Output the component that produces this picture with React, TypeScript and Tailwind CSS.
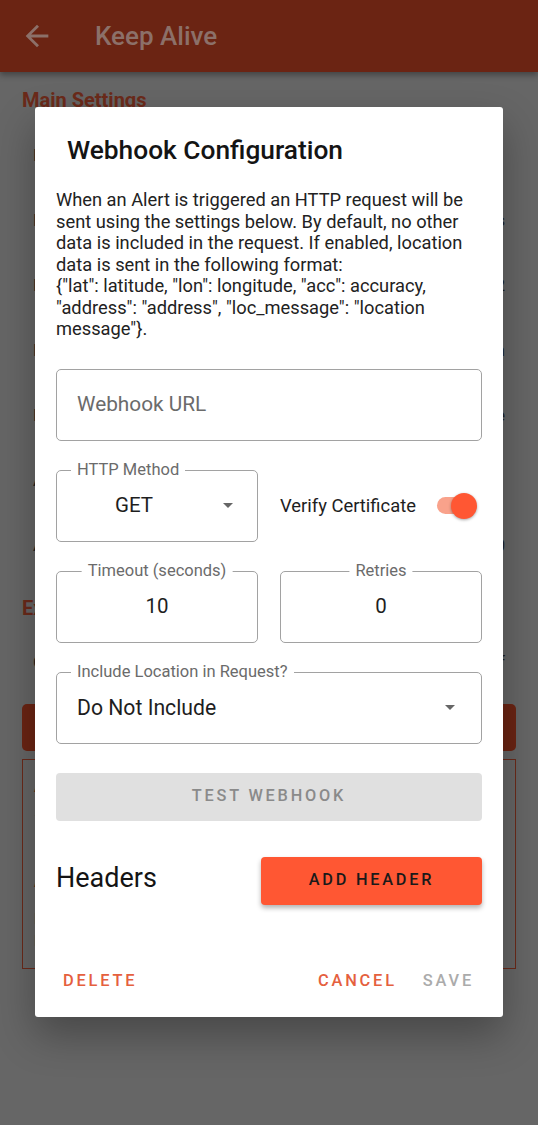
import React from "react"

// background page rows (dimmed under the scrim)
const mainRows = [
  { label: "Enabled", value: "" },
  { label: "Device Check Interval", value: "12 hours" },
  { label: "Hours of Inactivity", value: "12" },
  { label: "Reset on Unlock", value: "On" },
  { label: "Rest Period", value: "None" },
  { label: "Alert Message", value: "" },
  { label: "Alert Recipients", value: "0" },
]

function Caret() {
  return <span className="block w-0 h-0 border-l-[5px] border-r-[5px] border-t-[5px] border-l-transparent border-r-transparent border-t-[#666]" />
}

function Field({ label, center, className, children }: { label: string; center?: boolean; className?: string; children: React.ReactNode }) {
  return (
    <div className={"relative h-[72px] border border-[#a2a2a2] rounded-[5px] flex items-center " + (className ?? "")}>
      <span
        className={
          "absolute -top-[11px] px-[6px] bg-white text-[16.5px] leading-[20px] text-[#6b6b6b] whitespace-nowrap " +
          (center ? "left-1/2 -translate-x-1/2" : "left-[14px]")
        }
      >
        {label}
      </span>
      {children}
    </div>
  )
}

export default function App() {
  return (
    <div className="relative w-[538px] h-[1125px] overflow-hidden bg-[#666666] font-['Roboto',sans-serif]">
      {/* BACKGROUND PAGE */}
      <div className="h-[72px] bg-[#6b2413] flex items-center pl-[20px] shadow-[0_3px_6px_rgba(0,0,0,0.35)]">
        <svg width="34" height="34" viewBox="0 0 24 24" fill="#8c7069">
          <path d="M20 11H7.83l5.59-5.59L12 4l-8 8 8 8 1.41-1.41L7.83 13H20v-2z" />
        </svg>
        <span className="ml-[41px] text-[26px] font-medium text-[#8c7069]">Keep Alive</span>
      </div>
      <div className="px-[22px]">
        <div className="mt-[14px] text-[20px] leading-[28px] font-bold text-[#6b2a1a]">Main Settings</div>
        <div className="mt-[9px]">
          {mainRows.map((r) => (
            <div key={r.label} className="h-[65px] flex items-center justify-between pl-[11px] pr-[11px] text-[17px] text-[#1e1e1e]">
              <span>{r.label}</span>
              <span>{r.value}</span>
            </div>
          ))}
        </div>
        <div className="mt-[16px] text-[20px] leading-[28px] font-bold text-[#6b2a1a]">Extra Settings</div>
        <div className="h-[82px] flex items-center justify-between pl-[11px] pr-[11px] text-[17px] text-[#1e1e1e]">
          <span>Custom Message</span>
          <span>Off</span>
        </div>
        <div className="h-[47px] rounded-[5px] bg-[#6b2413]" />
        <div className="mt-[8px] h-[210px] border border-[#6b2a1a] px-[11px] pt-[16px] text-[15px]">
          <div className="text-[#6b2a1a] font-bold">Alert Webhook</div>
          <div className="mt-[6px] text-[#1e1e1e]">–</div>
          <div className="mt-[44px] text-[#6b2a1a] font-bold">Active</div>
          <div className="mt-[14px] text-[#1e1e1e]">Enabled</div>
          <div className="text-[#1e1e1e]">Both</div>
        </div>
      </div>

      {/* DIALOG */}
      <div className="absolute left-[35px] top-[107px] w-[468px] h-[910px] bg-white rounded-[3px] shadow-[0_18px_40px_rgba(0,0,0,0.3)] px-[21px] pt-[27px] flex flex-col">
        <h2 className="ml-[11px] text-[26.3px] leading-[32px] font-medium text-[#141414]">Webhook Configuration</h2>
        <p className="mt-[23px] text-[18.3px] leading-[21.5px] text-[#222]">
          When an Alert is triggered an HTTP request will be sent using the settings below. By default, no other data is included in the request. If enabled, location data is sent in the following format:
          <br />
          {'{"lat": latitude, "lon": longitude, "acc": accuracy, "address": "address", "loc_message": "location message"}.'}
        </p>

        <div className="mt-[29px] h-[72px] border border-[#a2a2a2] rounded-[5px] flex items-center px-[20px] text-[20.8px] text-[#6b6b6b]">
          Webhook URL
        </div>

        <div className="mt-[29px] flex items-center">
          <Field label="HTTP Method" className="w-[202px]">
            <span className="w-[154px] text-center text-[20.5px] text-[#1e1e1e]">GET</span>
            <span className="ml-auto mr-[24px]"><Caret /></span>
          </Field>
          <span className="ml-[22px] text-[18.4px] text-[#1e1e1e]">Verify Certificate</span>
          <div className="relative ml-auto mr-[5px] w-[40px] h-[26px] flex items-center">
            <div className="w-[34px] h-[17px] rounded-full bg-[#f9a28b]" />
            <div className="absolute right-0 top-0 w-[26px] h-[26px] rounded-full bg-[#ff5733] shadow-[0_1px_3px_rgba(0,0,0,0.35)]" />
          </div>
        </div>

        <div className="mt-[29px] flex gap-[22px]">
          <Field label="Timeout (seconds)" center className="w-[202px] justify-center">
            <span className="text-[20.5px] text-[#1e1e1e]">10</span>
          </Field>
          <Field label="Retries" center className="w-[202px] justify-center">
            <span className="text-[20.5px] text-[#1e1e1e]">0</span>
          </Field>
        </div>

        <Field label="Include Location in Request?" className="mt-[29px] pl-[20px]">
          <span className="text-[21.2px] text-[#1e1e1e]">Do Not Include</span>
          <span className="ml-auto mr-[26px]"><Caret /></span>
        </Field>

        <div className="mt-[29px] h-[48px] rounded-[4px] bg-[#e0e0e0] flex items-center justify-center text-[16.3px] font-medium tracking-[2.8px] text-[#8a8a8a]">
          TEST WEBHOOK
        </div>

        <div className="mt-[36px] flex items-center justify-between">
          <span className="text-[27px] text-[#141414] -mt-[4px]">Headers</span>
          <div className="w-[221px] h-[48px] rounded-[4px] bg-[#ff5733] shadow-[0_3px_5px_rgba(0,0,0,0.3)] flex items-center justify-center text-[16.3px] font-medium tracking-[2.8px] text-[#1a1a1a]">
            ADD HEADER
          </div>
        </div>

        <div className="mt-auto mb-[18px] h-[36px] flex items-center text-[16.4px] font-medium tracking-[2.8px]">
          <span className="ml-[7px] text-[#e5603e]">DELETE</span>
          <span className="ml-auto text-[#e5603e]">CANCEL</span>
          <span className="ml-[26px] mr-[8px] text-[#ababab]">SAVE</span>
        </div>
      </div>
    </div>
  )
}
